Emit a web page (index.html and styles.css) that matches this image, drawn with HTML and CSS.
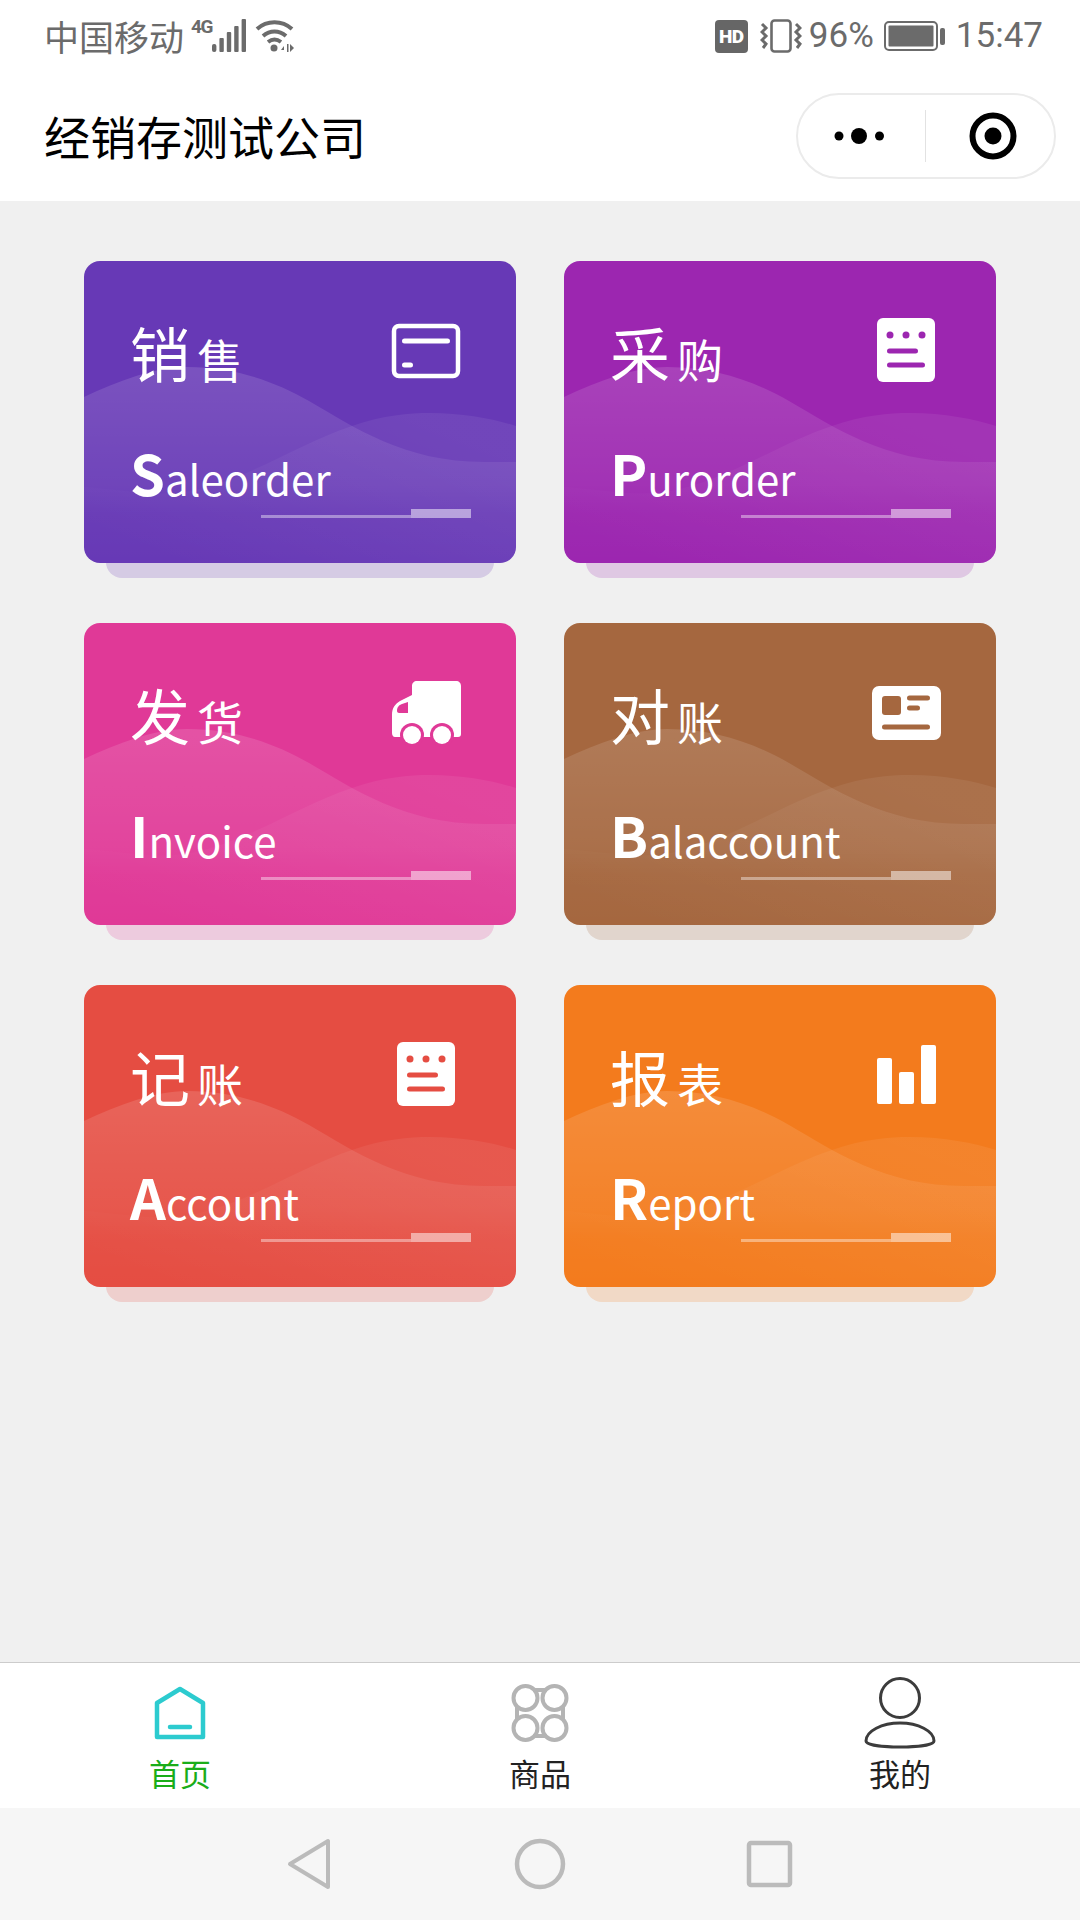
FILE: index.html
```html
<!DOCTYPE html>
<html lang="zh-CN">
<head>
    <meta charset="UTF-8">
    <meta name="viewport" content="width=device-width, initial-scale=1.0">
    <title>经销存测试公司</title>
    <link rel="stylesheet" href="styles.css">
</head>
<body>
    <svg class="defs" width="0" height="0" aria-hidden="true">
        <defs>
            <linearGradient id="waveBack" x1="0" y1="0" x2="0" y2="1">
                <stop offset="0" stop-color="#fff" stop-opacity="0.13"/>
                <stop offset="0.6" stop-color="#fff" stop-opacity="0.06"/>
                <stop offset="0.75" stop-color="#fff" stop-opacity="0.02"/>
                <stop offset="1" stop-color="#fff" stop-opacity="0"/>
            </linearGradient>
            <linearGradient id="waveFront" x1="1" y1="0.3" x2="0.2" y2="1">
                <stop offset="0" stop-color="#fff" stop-opacity="0.065"/>
                <stop offset="1" stop-color="#fff" stop-opacity="0"/>
            </linearGradient>
            <symbol id="waves" viewBox="0 0 432 302" preserveAspectRatio="none">
                <path fill="url(#waveBack)" d="M0 136C35 120 70 106 103 106C150 106 190 120 225 140C270 166 320 201 400 201L432 201V302H0Z"/>
                <path fill="url(#waveFront)" d="M0 226C30 228 60 234 90 232C150 228 210 184 268 165C300 154 325 152 346 152C380 152 410 158 432 165V302H0Z"/>
            </symbol>
            <symbol id="iconList" viewBox="0 0 72 72">
                <rect x="7" y="3" width="58" height="64" rx="6" fill="#fff"/>
                <circle class="tone-fill" cx="20" cy="20" r="3.5"/>
                <circle class="tone-fill" cx="36" cy="20" r="3.5"/>
                <circle class="tone-fill" cx="52" cy="20" r="3.5"/>
                <path class="tone-line" d="M19.500 36H45.500M19.500 50H52.500"/>
            </symbol>
        </defs>
    </svg>

    <header class="top">
        <div class="status">
            <div class="status-left">
                <span class="carrier">中国移动</span>
                <span class="net">4G</span>
                <svg class="signal" width="34" height="34" viewBox="0 0 34 34">
                    <rect x="0" y="25" width="4.4" height="8" rx="2"/>
                    <rect x="7.4" y="19" width="4.4" height="14" rx="1"/>
                    <rect x="14.8" y="13" width="4.4" height="20" rx="1"/>
                    <rect x="22.2" y="7" width="4.4" height="26" rx="1"/>
                    <rect x="29.6" y="0" width="4.4" height="33" rx="1"/>
                </svg>
                <svg class="wifi" width="40" height="36" viewBox="0 0 40 36">
                    <path d="M2 11C12 2 27 2 37 11M8 18C15 12 24 12 31 18M13 24C17 21 22 21 26 24" fill="none" stroke="#6b6b6b" stroke-width="4"/>
                    <circle cx="19" cy="30" r="3.5" fill="#6b6b6b"/>
                    <path d="M29 28L26 32H29ZM32 26V34H33.5V26ZM35 26V34L39 30Z" fill="#6b6b6b"/>
                </svg>
            </div>
            <div class="status-right">
                <span class="hd">HD</span>
                <svg class="vibrate" width="42" height="34" viewBox="0 0 42 34">
                    <rect x="11.5" y="1.5" width="19" height="31" rx="3" fill="none" stroke="#6b6b6b" stroke-width="2.6"/>
                    <path d="M2 5L6 9L2 13L6 17L2 21L6 25L3 29M36 5L40 9L36 13L40 17L36 21L40 25L37 29" fill="none" stroke="#6b6b6b" stroke-width="3"/>
                </svg>
                <span class="pct">96%</span>
                <svg class="battery" width="61" height="30" viewBox="0 0 61 30">
                    <rect x="1" y="1" width="52" height="28" rx="4" fill="none" stroke="#6b6b6b" stroke-width="2"/>
                    <rect x="4.500" y="4.500" width="45" height="21" rx="1" fill="#6b6b6b"/>
                    <rect x="56" y="7" width="5" height="17" rx="2" fill="#6b6b6b"/>
                </svg>
                <span class="time">15:47</span>
            </div>
        </div>
        <div class="navbar">
            <h1>经销存测试公司</h1>
            <div class="capsule">
                <div class="capsule-part">
                    <svg width="50" height="20" viewBox="0 0 50 20">
                        <circle cx="5" cy="10" r="4.500"/>
                        <circle cx="25" cy="10" r="8"/>
                        <circle cx="45.500" cy="10" r="4.500"/>
                    </svg>
                </div>
                <div class="capsule-part capsule-part-last">
                    <svg width="50" height="50" viewBox="0 0 50 50">
                        <circle cx="25" cy="25" r="20.500" fill="none" stroke="#000" stroke-width="6"/>
                        <circle cx="25" cy="25" r="8.500"/>
                    </svg>
                </div>
            </div>
        </div>
    </header>

    <main class="menu">
        <div class="tile tone-purple">
            <a class="card">
                <svg class="waves"><use href="#waves"/></svg>
                <div class="card-head">
                    <div class="zh"><b>销</b><span>售</span></div>
                    <svg class="card-icon" viewBox="0 0 72 72">
                        <rect x="4" y="11" width="64" height="50" rx="5" fill="none" stroke="#fff" stroke-width="4.500"/>
                        <path d="M14.500 26H57.500M14.500 50H20.500" fill="none" stroke="#fff" stroke-width="5" stroke-linecap="round"/>
                    </svg>
                </div>
                <div class="en"><b>S</b>aleorder</div>
                <div class="rule"><i></i><u></u></div>
            </a>
        </div>
        <div class="tile tone-mauve">
            <a class="card">
                <svg class="waves"><use href="#waves"/></svg>
                <div class="card-head">
                    <div class="zh"><b>采</b><span>购</span></div>
                    <svg class="card-icon"><use href="#iconList"/></svg>
                </div>
                <div class="en"><b>P</b>urorder</div>
                <div class="rule"><i></i><u></u></div>
            </a>
        </div>
        <div class="tile tone-pink">
            <a class="card">
                <svg class="waves"><use href="#waves"/></svg>
                <div class="card-head">
                    <div class="zh"><b>发</b><span>货</span></div>
                    <svg class="card-icon" viewBox="0 0 72 72">
                        <path fill="#fff" d="M22 9C22 6 24 4 27 4H66C69 4 71 6 71 9V57C71 59 70 60 68 60H5C3 60 2 58 2 56V38C2 31 5 27 10 24L22 18Z"/>
                        <path class="tone-fill" d="M7 34C7 30 9 28 12 27L18 25V36H9C8 36 7 35 7 34Z"/>
                        <circle class="tone-fill" cx="22" cy="58" r="12"/>
                        <circle class="tone-fill" cx="52" cy="58" r="12"/>
                        <circle cx="22" cy="58" r="9" fill="#fff"/>
                        <circle cx="52" cy="58" r="9" fill="#fff"/>
                    </svg>
                </div>
                <div class="en"><b>I</b>nvoice</div>
                <div class="rule"><i></i><u></u></div>
            </a>
        </div>
        <div class="tile tone-brown">
            <a class="card">
                <svg class="waves"><use href="#waves"/></svg>
                <div class="card-head">
                    <div class="zh"><b>对</b><span>账</span></div>
                    <svg class="card-icon" viewBox="0 0 72 72">
                        <rect x="2" y="9" width="69" height="54" rx="7" fill="#fff"/>
                        <rect class="tone-fill" x="12" y="19" width="19" height="19" rx="3"/>
                        <path class="tone-line" d="M39.500 21H57.500M39.500 31H47.500M14.500 50H57.500"/>
                    </svg>
                </div>
                <div class="en"><b>B</b>alaccount</div>
                <div class="rule"><i></i><u></u></div>
            </a>
        </div>
        <div class="tile tone-red">
            <a class="card">
                <svg class="waves"><use href="#waves"/></svg>
                <div class="card-head">
                    <div class="zh"><b>记</b><span>账</span></div>
                    <svg class="card-icon"><use href="#iconList"/></svg>
                </div>
                <div class="en"><b>A</b>ccount</div>
                <div class="rule"><i></i><u></u></div>
            </a>
        </div>
        <div class="tile tone-orange">
            <a class="card">
                <svg class="waves"><use href="#waves"/></svg>
                <div class="card-head">
                    <div class="zh"><b>报</b><span>表</span></div>
                    <svg class="card-icon" viewBox="0 0 72 72">
                        <rect x="7" y="19" width="15" height="46" rx="2" fill="#fff"/>
                        <rect x="29" y="33" width="15" height="32" rx="2" fill="#fff"/>
                        <rect x="51" y="6" width="15" height="59" rx="2" fill="#fff"/>
                    </svg>
                </div>
                <div class="en"><b>R</b>eport</div>
                <div class="rule"><i></i><u></u></div>
            </a>
        </div>
    </main>

    <nav class="tabbar">
        <div class="tab tab-active">
            <svg class="tab-icon" viewBox="0 0 72 72">
                <path d="M13 26L36 12L59 26V60H13Z" fill="none" stroke="#2ccbcf" stroke-width="4.500" stroke-linejoin="round"/>
                <path d="M26 50H46" fill="none" stroke="#2ccbcf" stroke-width="4.500" stroke-linecap="round"/>
            </svg>
            <span>首页</span>
        </div>
        <div class="tab">
            <svg class="tab-icon" viewBox="0 0 72 72">
                <g fill="none" stroke="#b4b4b4" stroke-width="4">
                    <circle cx="21.500" cy="21" r="12"/>
                    <circle cx="50.500" cy="21" r="12"/>
                    <circle cx="21.500" cy="51" r="12"/>
                    <circle cx="50.500" cy="51" r="12"/>
                    <path d="M29 13H43M29 59H43M13 29V43M59 29V43"/>
                </g>
            </svg>
            <span>商品</span>
        </div>
        <div class="tab">
            <svg class="tab-icon" viewBox="0 0 72 72">
                <g fill="none" stroke="#3c3c3c" stroke-width="3">
                    <circle cx="36" cy="21" r="19.500"/>
                    <path d="M2 64C2 54 18 46 36 46C54 46 70 54 70 64C70 72 2 72 2 64Z"/>
                </g>
            </svg>
            <span>我的</span>
        </div>
    </nav>

    <div class="sysnav">
        <svg width="48" height="54" viewBox="0 0 48 54">
            <path d="M42 4V50L4 27Z" fill="none" stroke="#bbb" stroke-width="4" stroke-linejoin="round"/>
        </svg>
        <svg width="52" height="52" viewBox="0 0 52 52">
            <circle cx="26" cy="26" r="23" fill="none" stroke="#bbb" stroke-width="4.500"/>
        </svg>
        <svg width="48" height="48" viewBox="0 0 48 48">
            <rect x="3" y="3" width="41" height="42" rx="2" fill="none" stroke="#bbb" stroke-width="4.500"/>
        </svg>
    </div>
</body>
</html>
```

FILE: styles.css
```css
* {
    box-sizing: border-box;
}

body {
    margin: 0;
    width: 1080px;
    height: 1920px;
    display: flex;
    flex-direction: column;
    font-family: "Noto Sans CJK SC", sans-serif;
    background: #f0f0f0;
    overflow: hidden;
}

.defs {
    position: absolute;
}

/* status bar + title */
.top {
    height: 201px;
    background: #fff;
}

.status {
    height: 72px;
    padding: 0 37px 0 44px;
    display: flex;
    justify-content: space-between;
    align-items: center;
    color: #6b6b6b;
}

.status-left, .status-right {
    display: flex;
    align-items: center;
}

.carrier {
    font-size: 35px;
    line-height: 72px;
}

.net {
    font-family: "Roboto", sans-serif;
    font-weight: 700;
    font-size: 19px;
    line-height: 19px;
    margin: -20px 0 0 7px;
    width: 21px;
    letter-spacing: -1.5px;
}

.signal {
    fill: #6b6b6b;
}

.wifi {
    margin-left: 9px;
}

.hd {
    width: 33px;
    height: 33px;
    border-radius: 4px;
    background: #666;
    color: #fff;
    font-family: "Roboto", sans-serif;
    font-weight: 900;
    font-size: 19px;
    line-height: 33px;
    text-align: center;
    letter-spacing: -0.5px;
}

.vibrate {
    margin-left: 12px;
}

.pct, .time {
    font-family: "Roboto", sans-serif;
    font-size: 35px;
    line-height: 72px;
}

.pct {
    margin-left: 7px;
}

.battery {
    margin-left: 10px;
}

.time {
    margin-left: 11px;
}

.navbar {
    height: 129px;
    padding: 0 24px 0 44px;
    display: flex;
    justify-content: space-between;
    align-items: flex-start;
}

.navbar h1 {
    margin: 0;
    font-size: 46px;
    font-weight: 400;
    line-height: 126px;
    color: #000;
}

.capsule {
    margin-top: 21px;
    width: 260px;
    height: 86px;
    border: 2px solid #ebebeb;
    border-radius: 43px;
    display: flex;
    align-items: center;
}

.capsule-part {
    flex: 1;
    display: flex;
    justify-content: center;
    align-items: center;
    height: 52px;
    padding-right: 4px;
}

.capsule-part-last {
    padding: 0 0 0 6px;
    border-left: 1px solid #e2e2e2;
}

/* cards */
.menu {
    flex: 1;
    padding: 60px 84px 0;
    display: grid;
    grid-template-columns: 432px 432px;
    grid-auto-rows: 302px;
    column-gap: 48px;
    row-gap: 60px;
    align-content: start;
}

.tile {
    position: relative;
}

.tile::after {
    content: "";
    position: absolute;
    left: 22px;
    right: 22px;
    bottom: -15px;
    height: 40px;
    border-radius: 0 0 16px 16px;
    background: var(--tone);
    opacity: 0.2;
}

.tone-purple { --tone: #6739b6; }
.tone-mauve { --tone: #9c26b0; }
.tone-pink { --tone: #e03997; }
.tone-brown { --tone: #a5673f; }
.tone-red { --tone: #e54d42; }
.tone-orange { --tone: #f37b1d; }

.card {
    position: relative;
    z-index: 1;
    display: block;
    height: 100%;
    padding: 54px 45px 0 46px;
    border-radius: 16px;
    overflow: hidden;
    background: var(--tone);
    color: #fff;
}

.waves {
    position: absolute;
    left: 0;
    top: 0;
    width: 100%;
    height: 100%;
}

.card-head {
    position: relative;
    height: 72px;
    display: flex;
    justify-content: space-between;
    padding-right: 9px;
}

.card-icon {
    width: 72px;
    height: 72px;
}

.tone-fill {
    fill: var(--tone);
}

.tone-line {
    fill: none;
    stroke: var(--tone);
    stroke-width: 5;
    stroke-linecap: round;
}

.zh {
    display: flex;
    align-items: baseline;
    line-height: 72px;
    margin-top: 1px;
}

.zh b {
    font-size: 60px;
    font-weight: 400;
}

.zh span {
    font-size: 46px;
    margin-left: 7px;
}

.en {
    position: relative;
    margin-top: 47px;
    height: 74px;
    line-height: 76px;
    font-size: 42px;
    font-weight: 400;
}

.en b {
    font-size: 56px;
    font-weight: 700;
}

.rule {
    position: relative;
    margin: 1px 0 0 auto;
    width: 210px;
    height: 9px;
    display: flex;
    align-items: flex-end;
}

.rule i {
    flex: 1;
    height: 3px;
    background: rgba(255, 255, 255, 0.4);
}

.rule u {
    width: 60px;
    height: 9px;
    background: rgba(255, 255, 255, 0.5);
}

/* bottom tabs */
.tabbar {
    height: 146px;
    border-top: 1px solid #ccc;
    background: #fff;
    display: flex;
}

.tab {
    flex: 1;
    padding-top: 14px;
    display: flex;
    flex-direction: column;
    align-items: center;
    color: #222;
}

.tab-active {
    color: #1aad19;
}

.tab-icon {
    width: 72px;
    height: 72px;
}

.tab span {
    margin-top: 4px;
    font-size: 31px;
    line-height: 40px;
}

/* android buttons */
.sysnav {
    height: 112px;
    background: #f6f6f6;
    display: flex;
    justify-content: center;
    align-items: center;
    gap: 180px;
}
```
